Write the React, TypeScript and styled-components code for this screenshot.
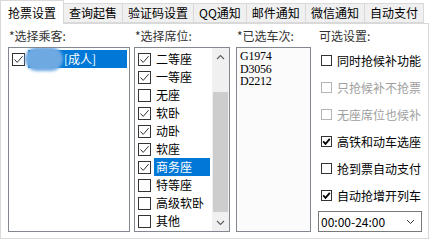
import React from 'react'
import styled, { createGlobalStyle } from 'styled-components'

const GlobalStyle = createGlobalStyle`
    html, body {
        margin: 0;
        padding: 0;
        background: #ffffff;
    }
    body {
        font-family: "Noto Sans CJK SC", "Noto Sans", sans-serif;
        font-size: 12px;
        color: #1a1a1a;
    }
`

const Window = styled.div`
    width: 433px;
    height: 245px;
    overflow: hidden;
    background: #ffffff;
`

const TabBar = styled.div`
    display: flex;
    align-items: flex-end;
    height: 23px;
    width: 429px;
    position: relative;
    z-index: 2;
`

const Tab = styled.div<{ $active?: boolean }>`
    height: ${({ $active }) => ($active ? '24px' : '20px')};
    margin-bottom: ${({ $active }) => ($active ? '-1px' : '0px')};
    padding: 0 ${({ $active }) => ($active ? '7px' : '5px')};
    margin-left: ${({ $active }) => ($active ? '0px' : '-1px')};
    display: flex;
    align-items: center;
    border: 1px solid #d9d9d9;
    border-bottom: ${({ $active }) => ($active ? 'none' : '1px solid #d9d9d9')};
    background: ${({ $active }) => ($active ? '#ffffff' : '#f0f0f0')};
    color: #000;
    font-size: 12px;
    line-height: 14px;
    white-space: nowrap;
    box-sizing: border-box;
`

const Panel = styled.div`
    width: 429px;
    height: 216px;
    box-sizing: border-box;
    border: 1px solid #d9d9d9;
    padding: 4px 0 0 7px;
    display: flex;
    position: relative;
    z-index: 1;
`

const Column = styled.div<{ $w: number; $ml?: number }>`
    width: ${({ $w }) => $w}px;
    margin-left: ${({ $ml }) => $ml ?? 0}px;
    display: flex;
    flex-direction: column;
`

const Label = styled.div<{ $pl?: number }>`
    height: 16px;
    line-height: 16px;
    margin-bottom: 3px;
    padding-left: ${({ $pl }) => $pl ?? 1}px;
    color: #333;
    font-size: 12px;
    white-space: nowrap;
`

const ListBox = styled.div<{ $bg?: string }>`
    height: 185px;
    box-sizing: border-box;
    border: 1px solid #828790;
    background: ${({ $bg }) => $bg ?? '#ffffff'};
    display: flex;
    overflow: hidden;
`

const ListItems = styled.div`
    flex: 1;
    padding: 2px 2px 0 2px;
    overflow: hidden;
`

const Item = styled.div`
    height: 18px;
    display: flex;
    align-items: center;
    white-space: nowrap;
`

const ItemText = styled.span<{ $selected?: boolean }>`
    flex: 1;
    height: 18px;
    line-height: 18px;
    margin-left: 3px;
    padding-left: 2px;
    background: ${({ $selected }) => ($selected ? '#0078d7' : 'transparent')};
    color: ${({ $selected }) => ($selected ? '#ffffff' : '#000000')};
    display: flex;
    align-items: center;
`

const Blur = styled.span`
    display: inline-block;
    width: 38px;
    height: 24px;
    margin: 0 1px 0 -5px;
    border-radius: 12px;
    background: #6fa9e2;
    filter: blur(1.5px);
`

const ListCheck = styled.span`
    width: 13px;
    height: 13px;
    box-sizing: border-box;
    border: 1px solid #333;
    background: #fff;
    margin-left: 1px;
    display: inline-flex;
    align-items: center;
    justify-content: center;
    flex-shrink: 0;
`

const ScrollBar = styled.div`
    width: 17px;
    background: #f0f0f0;
    display: flex;
    flex-direction: column;
`

const ScrollArrow = styled.div`
    height: 17px;
    display: flex;
    align-items: center;
    justify-content: center;
    color: #606060;
`

const ScrollTrack = styled.div`
    flex: 1;
    padding: 27px 1px 0 1px;
`

const ScrollThumb = styled.div`
    height: 120px;
    background: #cdcdcd;
`

const TrainText = styled.div`
    padding: 2px 0 0 3px;
    font-family: "Liberation Serif", "Times New Roman", serif;
    font-size: 12px;
    letter-spacing: -0.2px;
    line-height: 12.5px;
    color: #000;
`

const OptionRow = styled.div<{ $disabled?: boolean }>`
    height: 27px;
    display: flex;
    align-items: center;
    padding-left: 3px;
    color: ${({ $disabled }) => ($disabled ? '#a0a0a0' : '#000000')};
    white-space: nowrap;
`

const OptCheck = styled.span<{ $disabled?: boolean }>`
    width: 11px;
    height: 11px;
    box-sizing: border-box;
    border: 1px solid ${({ $disabled }) => ($disabled ? '#b4b4b4' : '#333333')};
    background: #fff;
    margin-right: 5px;
    display: inline-flex;
    align-items: center;
    justify-content: center;
`

const Select = styled.div`
    margin-top: 2px;
    width: 104px;
    height: 21px;
    box-sizing: border-box;
    border: 1px solid #7a7a7a;
    display: flex;
    align-items: center;
    justify-content: space-between;
    padding: 0 6px 0 2px;
    font-size: 12px;
    color: #000;
`

function ThinCheck() {
    return (
        <svg width="11" height="11" viewBox="0 0 11 11">
            <path d="M1.5 5.5 L4.2 8.4 L9.6 2.2" fill="none" stroke="#333" strokeWidth="1" />
        </svg>
    )
}

function BoldCheck() {
    return (
        <svg width="9" height="9" viewBox="0 0 9 9">
            <path d="M1.2 4.4 L3.5 6.8 L7.8 1.8" fill="none" stroke="#000" strokeWidth="1.8" />
        </svg>
    )
}

const seats = [
    { name: '二等座', checked: true },
    { name: '一等座', checked: true },
    { name: '无座', checked: false },
    { name: '软卧', checked: true },
    { name: '动卧', checked: true },
    { name: '软座', checked: true },
    { name: '商务座', checked: true, selected: true },
    { name: '特等座', checked: false },
    { name: '高级软卧', checked: false },
    { name: '其他', checked: false },
]

const options = [
    { name: '同时抢候补功能', checked: false },
    { name: '只抢候补不抢票', checked: false, disabled: true },
    { name: '无座席位也候补', checked: false, disabled: true },
    { name: '高铁和动车选座', checked: true },
    { name: '抢到票自动支付', checked: false },
    { name: '自动抢增开列车', checked: true },
]

const tabs = ['抢票设置', '查询起售', '验证码设置', 'QQ通知', '邮件通知', '微信通知', '自动支付']

export default function App() {
    return (
        <Window>
            <GlobalStyle />
            <TabBar>
                {tabs.map((t, i) => (
                    <Tab key={t} $active={i === 0}>{t}</Tab>
                ))}
            </TabBar>
            <Panel>
                <Column $w={122}>
                    <Label>*选择乘客:</Label>
                    <ListBox>
                        <ListItems>
                            <Item>
                                <ListCheck><ThinCheck /></ListCheck>
                                <ItemText $selected>
                                    <Blur />[成人]
                                </ItemText>
                            </Item>
                        </ListItems>
                    </ListBox>
                </Column>
                <Column $w={96} $ml={4}>
                    <Label>*选择席位:</Label>
                    <ListBox>
                        <ListItems>
                            {seats.map(s => (
                                <Item key={s.name}>
                                    <ListCheck>{s.checked && <ThinCheck />}</ListCheck>
                                    <ItemText $selected={s.selected}>{s.name}</ItemText>
                                </Item>
                            ))}
                        </ListItems>
                        <ScrollBar>
                            <ScrollArrow>
                                <svg width="9" height="6" viewBox="0 0 9 6">
                                    <path d="M1 5 L4.5 1.5 L8 5" fill="none" stroke="#606060" strokeWidth="1.2" />
                                </svg>
                            </ScrollArrow>
                            <ScrollTrack>
                                <ScrollThumb />
                            </ScrollTrack>
                            <ScrollArrow>
                                <svg width="9" height="6" viewBox="0 0 9 6">
                                    <path d="M1 1 L4.5 4.5 L8 1" fill="none" stroke="#606060" strokeWidth="1.2" />
                                </svg>
                            </ScrollArrow>
                        </ScrollBar>
                    </ListBox>
                </Column>
                <Column $w={75} $ml={6}>
                    <Label>*已选车次:</Label>
                    <ListBox $bg="#fbfbfb">
                        <TrainText>
                            G1974<br />D3056<br />D2212
                        </TrainText>
                    </ListBox>
                </Column>
                <Column $w={106} $ml={7}>
                    <Label>可选设置:</Label>
                    {options.map(o => (
                        <OptionRow key={o.name} $disabled={o.disabled}>
                            <OptCheck $disabled={o.disabled}>{o.checked && <BoldCheck />}</OptCheck>
                            {o.name}
                        </OptionRow>
                    ))}
                    <Select>
                        <span>00:00-24:00</span>
                        <svg width="9" height="6" viewBox="0 0 9 6">
                            <path d="M1 1 L4.5 4.5 L8 1" fill="none" stroke="#333" strokeWidth="1" />
                        </svg>
                    </Select>
                </Column>
            </Panel>
        </Window>
    )
}
